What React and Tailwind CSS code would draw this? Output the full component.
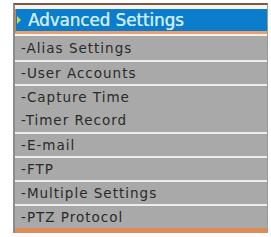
export default function App() {
  const items = [
    "Alias Settings",
    "User Accounts",
    "Capture Time",
    "Timer Record",
    "E-mail",
    "FTP",
    "Multiple Settings",
    "PTZ Protocol",
  ];
  return (
    <div className="w-[271px] h-[237px] bg-white overflow-hidden" style={{ fontFamily: '"DejaVu Sans", Verdana, sans-serif' }}>
      <div className="ml-[13px] mt-[3px] w-[255px] h-[230px] border-t-2 border-t-[#7a5a48] border-l-2 border-l-[#8c8c8c] border-r border-r-[#9a9a9a] bg-[#fbf3ee] flex flex-col">
        <div className="mt-[4px] h-[26px] bg-[#0b7dcc] border-b-[3px] border-b-[#e8a070] border-l border-l-[#d08050] flex items-center">
          <span className="ml-[1px] w-0 h-0 border-y-[4px] border-y-transparent border-l-[4px] border-l-[#c8d850]" />
          <span
            className="ml-[7px] text-[18.5px] leading-none text-[#c9ecff] [text-shadow:0.4px_0_0_#c9ecff]"
            style={{ fontFamily: '"DejaVu Sans Condensed", "DejaVu Sans", sans-serif' }}
          >
            Advanced Settings
          </span>
        </div>
        <div className="flex flex-col bg-[#a9a9a9] mt-[2px]">
          {items.map((t, i) => (
            <div
              key={t}
              className={
                "h-[24px] flex items-center pl-[6px] text-[13.5px] tracking-[1px] text-[#2a2a2a] " +
                (i > 0 && i !== 3 ? "border-t-2 border-t-[#ececec]" : "")
              }
            >
              -{t}
            </div>
          ))}
        </div>
        <div className="h-[5px] bg-[#e08a55]" />
      </div>
    </div>
  );
}
